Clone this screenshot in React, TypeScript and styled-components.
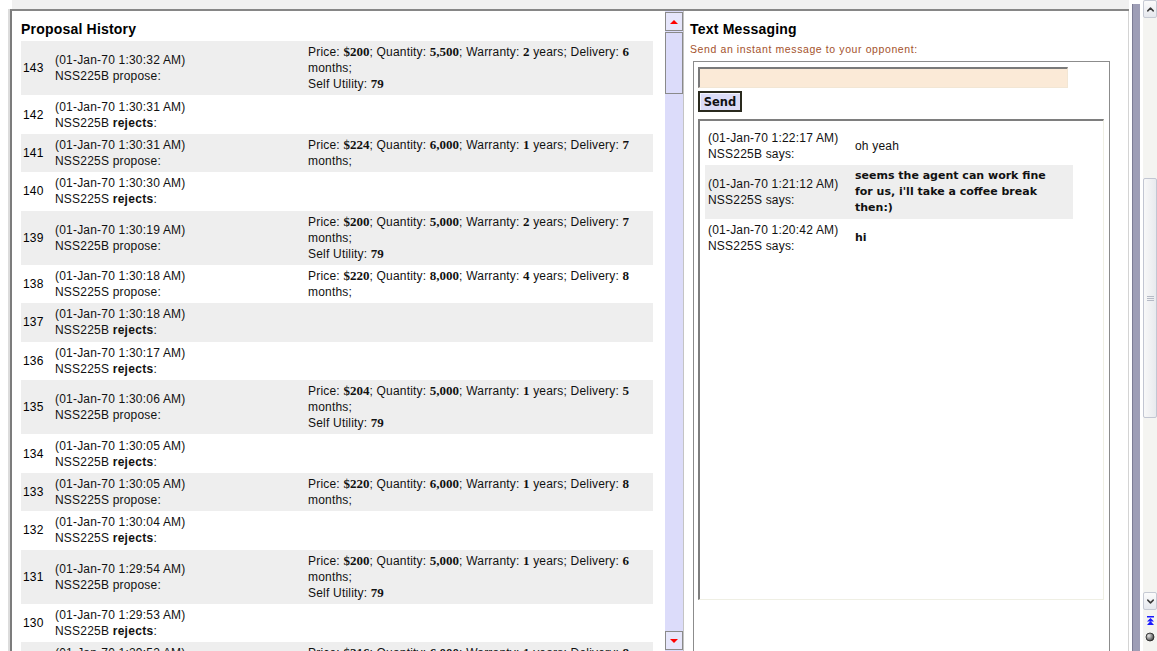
import React from "react";
import styled, { createGlobalStyle } from "styled-components";
import { ChevronUp, ChevronDown } from "lucide-react";

type Offer = {
  price: string;
  quantity: string;
  warranty: string;
  delivery: string;
  utility?: string;
};

type Proposal = {
  id: number;
  time: string;
  agent: string;
  action: "propose" | "rejects";
  offer?: Offer;
};

type ChatLine = {
  time: string;
  agent: string;
  text: string;
  bold?: boolean;
};

const proposals: Proposal[] = [
  { id: 143, time: "01-Jan-70 1:30:32 AM", agent: "NSS225B", action: "propose", offer: { price: "$200", quantity: "5,500", warranty: "2", delivery: "6", utility: "79" } },
  { id: 142, time: "01-Jan-70 1:30:31 AM", agent: "NSS225B", action: "rejects" },
  { id: 141, time: "01-Jan-70 1:30:31 AM", agent: "NSS225S", action: "propose", offer: { price: "$224", quantity: "6,000", warranty: "1", delivery: "7" } },
  { id: 140, time: "01-Jan-70 1:30:30 AM", agent: "NSS225S", action: "rejects" },
  { id: 139, time: "01-Jan-70 1:30:19 AM", agent: "NSS225B", action: "propose", offer: { price: "$200", quantity: "5,000", warranty: "2", delivery: "7", utility: "79" } },
  { id: 138, time: "01-Jan-70 1:30:18 AM", agent: "NSS225S", action: "propose", offer: { price: "$220", quantity: "8,000", warranty: "4", delivery: "8" } },
  { id: 137, time: "01-Jan-70 1:30:18 AM", agent: "NSS225B", action: "rejects" },
  { id: 136, time: "01-Jan-70 1:30:17 AM", agent: "NSS225S", action: "rejects" },
  { id: 135, time: "01-Jan-70 1:30:06 AM", agent: "NSS225B", action: "propose", offer: { price: "$204", quantity: "5,000", warranty: "1", delivery: "5", utility: "79" } },
  { id: 134, time: "01-Jan-70 1:30:05 AM", agent: "NSS225B", action: "rejects" },
  { id: 133, time: "01-Jan-70 1:30:05 AM", agent: "NSS225S", action: "propose", offer: { price: "$220", quantity: "6,000", warranty: "1", delivery: "8" } },
  { id: 132, time: "01-Jan-70 1:30:04 AM", agent: "NSS225S", action: "rejects" },
  { id: 131, time: "01-Jan-70 1:29:54 AM", agent: "NSS225B", action: "propose", offer: { price: "$200", quantity: "5,000", warranty: "1", delivery: "6", utility: "79" } },
  { id: 130, time: "01-Jan-70 1:29:53 AM", agent: "NSS225B", action: "rejects" },
  { id: 129, time: "01-Jan-70 1:29:52 AM", agent: "NSS225S", action: "propose", offer: { price: "$216", quantity: "6,000", warranty: "1", delivery: "8" } },
  { id: 128, time: "01-Jan-70 1:29:51 AM", agent: "NSS225S", action: "rejects" },
];

const chat: ChatLine[] = [
  { time: "01-Jan-70 1:22:17 AM", agent: "NSS225B", text: "oh yeah" },
  { time: "01-Jan-70 1:21:12 AM", agent: "NSS225S", text: "seems the agent can work fine for us, i'll take a coffee break then:)", bold: true },
  { time: "01-Jan-70 1:20:42 AM", agent: "NSS225S", text: "hi", bold: true },
];

export default function App() {
  return (
    <>
      <GlobalStyle />
      <Window>
        <Desktop>
          <Column>
            <TopBand />
            <FrameSet>
              <HistoryFrame>
                <HistoryBody>
                  <PanelTitle>Proposal History</PanelTitle>
                  {proposals.map((p, i) => (
                    <HistoryRow key={p.id} $shaded={i % 2 === 0}>
                      <RowNumber>{p.id}</RowNumber>
                      <Stamp>
                        ({p.time})
                        <br />
                        {p.agent} {p.action === "rejects" ? <Verb>rejects</Verb> : "propose"}:
                      </Stamp>
                      <Terms>
                        {p.offer && (
                          <>
                            Price: <Num>{p.offer.price}</Num>; Quantity: <Num>{p.offer.quantity}</Num>; Warranty:{" "}
                            <Num>{p.offer.warranty}</Num> years; Delivery: <Num>{p.offer.delivery}</Num> months;
                            {p.offer.utility && (
                              <>
                                <br />
                                Self Utility: <Num>{p.offer.utility}</Num>
                              </>
                            )}
                          </>
                        )}
                      </Terms>
                    </HistoryRow>
                  ))}
                </HistoryBody>
                <FrameScrollbar>
                  <FrameArrow>
                    <RedTriangle $down={false} />
                  </FrameArrow>
                  <FrameThumb />
                  <FrameTrack />
                  <FrameArrow>
                    <RedTriangle $down />
                  </FrameArrow>
                </FrameScrollbar>
              </HistoryFrame>
              <ChatFrame>
                <PanelTitle>Text Messaging</PanelTitle>
                <Prompt>Send an instant message to your opponent:</Prompt>
                <FormBox>
                  <MessageInput />
                  <SendButton>Send</SendButton>
                  <MessageLog>
                    {chat.map((c, i) => (
                      <ChatRow key={c.time} $shaded={i % 2 === 1}>
                        <ChatStamp>
                          ({c.time})
                          <br />
                          {c.agent} says:
                        </ChatStamp>
                        <ChatText $bold={!!c.bold}>{c.text}</ChatText>
                      </ChatRow>
                    ))}
                  </MessageLog>
                </FormBox>
              </ChatFrame>
            </FrameSet>
          </Column>
          <Gutter>
            <GutterBand />
          </Gutter>
        </Desktop>
        <WindowScrollbar>
          <ScrollButton>
            <ChevronUp size={11} strokeWidth={3.2} color="#3a3a3a" />
          </ScrollButton>
          <ScrollTrack>
            <ScrollThumb>
              <Grip />
            </ScrollThumb>
          </ScrollTrack>
          <ScrollButton>
            <ChevronDown size={11} strokeWidth={3.2} color="#3a3a3a" />
          </ScrollButton>
          <BrowseButtons>
            <svg width="9" height="10" viewBox="0 0 9 10">
              <rect x="1" y="0" width="7" height="1.5" fill="#1a1aff" />
              <polygon points="4.5,2 8,5.5 1,5.5" fill="#1a1aff" />
              <polygon points="4.5,5 8,9 1,9" fill="#1a1aff" />
            </svg>
            <svg width="10" height="10" viewBox="0 0 10 10">
              <defs>
                <radialGradient id="ball" cx="35%" cy="35%" r="70%">
                  <stop offset="0" stopColor="#e8e8e8" />
                  <stop offset="1" stopColor="#3c3c3c" />
                </radialGradient>
              </defs>
              <circle cx="5" cy="5" r="4" fill="url(#ball)" stroke="#222" strokeWidth="0.8" />
            </svg>
          </BrowseButtons>
        </WindowScrollbar>
      </Window>
    </>
  );
}

const GlobalStyle = createGlobalStyle`
  html, body {
    margin: 0;
    padding: 0;
    background: #fff;
  }
  body {
    font-family: "Liberation Sans", Arial, sans-serif;
    font-size: 12px;
    color: #000;
  }
`;

const Window = styled.div`
  display: flex;
  width: 1157px;
  height: 651px;
  overflow: hidden;
  background: #fff;
`;

const Desktop = styled.div`
  flex: 1;
  display: flex;
  padding-left: 8px;
  min-width: 0;
`;

const Column = styled.div`
  flex: 1;
  display: flex;
  flex-direction: column;
  min-width: 0;
`;

const TopBand = styled.div`
  height: 9px;
  margin-left: 4px;
  background: #f0f0f0;
`;

const FrameSet = styled.div`
  flex: 1;
  display: flex;
  min-height: 0;
  margin-left: 2px;
  border-top: 2px solid #868686;
  border-left: 2px solid #7c7c7c;
  box-shadow: -2px 0 0 #dcdcdc;
`;

const HistoryFrame = styled.div`
  width: 671px;
  display: flex;
  flex-shrink: 0;
`;

const HistoryBody = styled.div`
  flex: 1;
  overflow: hidden;
  padding: 9px 12px 0 9px;
`;

const PanelTitle = styled.h2`
  margin: 0 0 3px;
  font-family: "Liberation Sans", Arial, sans-serif;
  font-size: 14px;
  letter-spacing: 0.2px;
  line-height: 18px;
  font-weight: bold;
  color: #000;
`;

const HistoryRow = styled.div<{ $shaded: boolean }>`
  display: grid;
  grid-template-columns: 34px 253px 1fr;
  align-items: center;
  padding: 3.2px 0;
  background: ${(p) => (p.$shaded ? "#eeeeee" : "transparent")};
  line-height: 16px;
  letter-spacing: 0.2px;
`;

const RowNumber = styled.div`
  padding-left: 2px;
  font-size: 12px;
`;

const Stamp = styled.div`
  font-size: 12px;
  color: #111;
`;

const Verb = styled.b`
  font-family: "Liberation Sans", Arial, sans-serif;
  font-weight: bold;
  font-size: 12px;
  letter-spacing: 0.3px;
`;

const Terms = styled.div`
  padding-right: 5px;
  font-size: 12px;
  color: #111;
`;

const Num = styled.b`
  font-family: "Liberation Serif", "Times New Roman", serif;
  font-weight: bold;
  font-size: 13px;
  letter-spacing: 0;
`;

const FrameScrollbar = styled.div`
  width: 18px;
  display: flex;
  flex-direction: column;
  background: #dcdcfa;
  padding: 1px 0;
  box-sizing: border-box;
`;

const FrameArrow = styled.div`
  height: 19px;
  display: flex;
  align-items: center;
  justify-content: center;
  border: 1px solid #8a8a8a;
  background: #e6e6fb;
  box-sizing: border-box;
`;

const RedTriangle = styled.span<{ $down: boolean }>`
  width: 0;
  height: 0;
  border-left: 4px solid transparent;
  border-right: 4px solid transparent;
  ${(p) => (p.$down ? "border-top: 4px solid #f00;" : "border-bottom: 4px solid #f00;")}
`;

const FrameThumb = styled.div`
  height: 62px;
  margin-top: 1px;
  border: 1px solid #8a8a8a;
  background: #dcdcfa;
  box-sizing: border-box;
`;

const FrameTrack = styled.div`
  flex: 1;
`;

const ChatFrame = styled.div`
  flex: 1;
  display: flex;
  flex-direction: column;
  min-width: 0;
  overflow: hidden;
  padding: 9px 0 0 6px;
  border-left: 1px solid #c4c4c4;
  border-right: 1px solid #d4d4d4;
`;

const Prompt = styled.div`
  margin: 1px 0 5px;
  font-size: 10.5px;
  letter-spacing: 0.6px;
  line-height: 14px;
  color: #a4522c;
`;

const FormBox = styled.div`
  flex: 1;
  width: 417px;
  margin-left: 3px;
  padding: 5px 4px 0;
  border: 1px solid #8c8c8c;
  border-bottom: none;
  box-sizing: border-box;
`;

const MessageInput = styled.div`
  width: 370px;
  height: 21px;
  background: #fbead7;
  border-top: 2px solid #7a7a7a;
  border-left: 2px solid #7a7a7a;
  border-right: 1px solid #f2e6d4;
  border-bottom: 1px solid #f2e6d4;
  box-sizing: border-box;
`;

const SendButton = styled.div`
  width: 44px;
  height: 21px;
  margin-top: 3px;
  display: flex;
  align-items: center;
  justify-content: center;
  background: #dcdcf6;
  border: 2px solid #2a2a1e;
  box-shadow: inset 1px 1px 0 #f4f4ff;
  box-sizing: border-box;
  font-family: "DejaVu Sans", Verdana, sans-serif;
  font-weight: bold;
  font-size: 11.5px;
  color: #111;
`;

const MessageLog = styled.div`
  width: 406px;
  height: 481px;
  margin-top: 7px;
  padding: 6px 0 0 5px;
  border-top: 2px solid #7e7e7e;
  border-left: 2px solid #7e7e7e;
  border-right: 1px solid #efefe4;
  border-bottom: 1px solid #efefe4;
  box-sizing: border-box;
`;

const ChatRow = styled.div<{ $shaded: boolean }>`
  width: 368px;
  display: grid;
  grid-template-columns: 150px 1fr;
  align-items: center;
  padding: 3px 0;
  line-height: 16px;
  background: ${(p) => (p.$shaded ? "#eeeeee" : "transparent")};
`;

const ChatStamp = styled.div`
  padding-left: 3px;
  font-size: 12px;
  letter-spacing: 0.2px;
  color: #111;
`;

const ChatText = styled.div<{ $bold: boolean }>`
  padding-right: 6px;
  font-family: ${(p) => (p.$bold ? `"DejaVu Sans", Verdana, sans-serif` : `"Liberation Sans", Arial, sans-serif`)};
  font-weight: ${(p) => (p.$bold ? "bold" : "normal")};
  font-size: ${(p) => (p.$bold ? "11px" : "12px")};
  letter-spacing: ${(p) => (p.$bold ? "0" : "0.2px")};
  color: #111;
`;

const Gutter = styled.div`
  width: 14px;
  flex-shrink: 0;
  padding: 4px 3px 0 3px;
  box-sizing: border-box;
  display: flex;
`;

const GutterBand = styled.div`
  flex: 1;
  background: #9e9eb6;
  border-left: 1px solid #7c7c94;
`;

const WindowScrollbar = styled.div`
  width: 14px;
  flex-shrink: 0;
  display: flex;
  flex-direction: column;
  background: #f4f4f1;
`;

const ScrollButton = styled.div`
  height: 18px;
  display: flex;
  align-items: center;
  justify-content: center;
  border: 1px solid #c6cad4;
  border-radius: 2px;
  background: linear-gradient(#fbfbfb, #e6e8ee);
  box-sizing: border-box;
`;

const ScrollTrack = styled.div`
  flex: 1;
  padding-top: 160px;
`;

const ScrollThumb = styled.div`
  height: 240px;
  display: flex;
  align-items: center;
  justify-content: center;
  border: 1px solid #c2c6d2;
  border-radius: 2px;
  background: linear-gradient(90deg, #f8f8f8, #e8eaee);
  box-sizing: border-box;
`;

const Grip = styled.span`
  width: 7px;
  height: 5px;
  background: repeating-linear-gradient(#b6bac6 0 1px, transparent 1px 2px);
`;

const BrowseButtons = styled.div`
  height: 41px;
  display: flex;
  flex-direction: column;
  align-items: center;
  gap: 6px;
  padding-top: 6px;
  box-sizing: border-box;
`;
